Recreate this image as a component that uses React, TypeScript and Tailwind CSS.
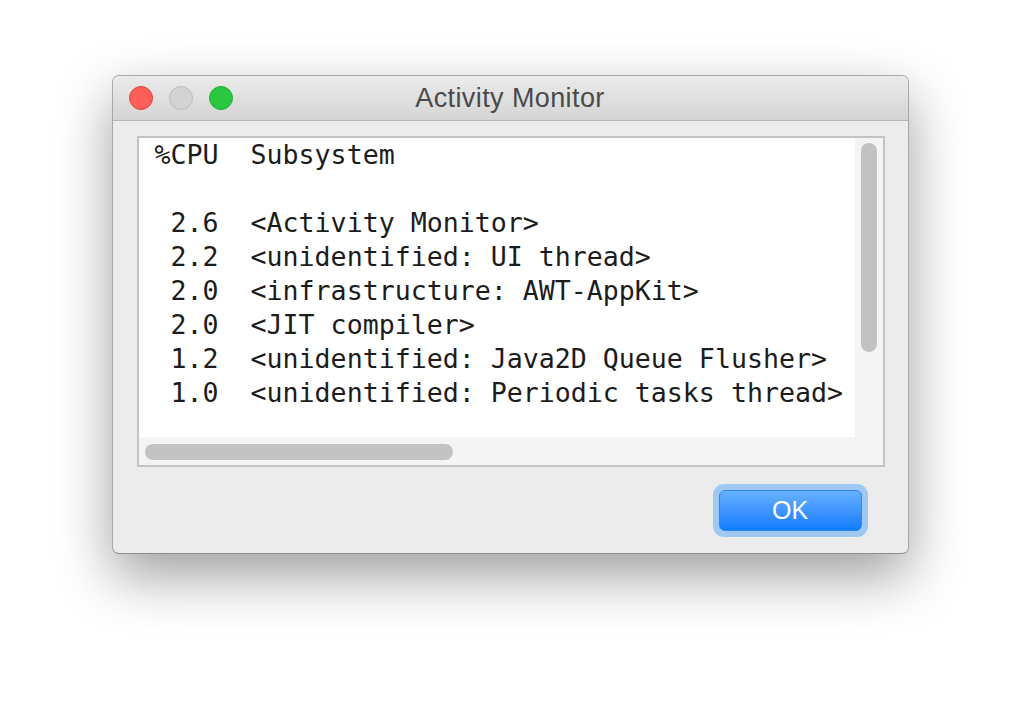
import React from 'react';

const rows: string[] = [
  '%CPU  Subsystem',
  '',
  ' 2.6  <Activity Monitor>',
  ' 2.2  <unidentified: UI thread>',
  ' 2.0  <infrastructure: AWT-AppKit>',
  ' 2.0  <JIT compiler>',
  ' 1.2  <unidentified: Java2D Queue Flusher>',
  ' 1.0  <unidentified: Periodic tasks thread>',
];

const TrafficLights: React.FC = () => (
  <div className="flex items-center gap-4">
    <span className="w-6 h-6 rounded-full bg-[#fe5f57] border border-[#e0443e]" />
    <span className="w-6 h-6 rounded-full bg-[#d3d3d3] border border-[#bcbcbc]" />
    <span className="w-6 h-6 rounded-full bg-[#2ac840] border border-[#1fae2f]" />
  </div>
);

const App: React.FC = () => {
  return (
    <div className="w-[1020px] h-[702px] bg-white flex justify-center pt-[75px]">
      <div className="w-[797px] h-[479px] flex flex-col rounded-[7px] overflow-hidden bg-[#ececec] border border-[#a8a8a8] border-b-[#8e8e8e] shadow-[0_22px_55px_rgba(0,0,0,0.38)]">
        {/* title bar */}
        <div className="relative h-[45px] shrink-0 flex items-center px-4 bg-gradient-to-b from-[#ebebeb] to-[#d5d5d5] border-b border-[#b8b8b8]">
          <TrafficLights />
          <div
            className="absolute inset-0 flex items-center justify-center text-[27px] tracking-[0.4px] text-[#4a4a4a]"
            style={{ fontFamily: '"Liberation Sans", Arial, sans-serif' }}
          >
            Activity Monitor
          </div>
        </div>

        {/* content */}
        <div className="flex-1 flex flex-col pt-[15px] pl-[24px] pr-[23px]">
          <div className="w-[748px] h-[331px] border-2 border-[#c3c3c3] grid grid-cols-[716px_28px] grid-rows-[299px_28px] bg-[#f4f4f4]">
            <div
              className="bg-white pl-4 text-[26.6px] leading-[34px] text-[#1c1c1c] whitespace-pre overflow-hidden"
              style={{ fontFamily: '"DejaVu Sans Mono", "Liberation Mono", monospace' }}
            >
              {rows.map((r, i) => (
                <div key={i} className="h-[34px]">{r}</div>
              ))}
            </div>
            <div className="pl-[6px] pt-[5px]">
              <div className="w-4 h-[209px] rounded-full bg-[#c2c2c2]" />
            </div>
            <div className="pl-[6px] pt-[7px]">
              <div className="w-[308px] h-4 rounded-full bg-[#c2c2c2]" />
            </div>
            <div />
          </div>

          <div className="flex justify-end pt-[17px] pr-[17px]">
            <div className="rounded-[11px] bg-[#a0c8f5] p-[6px]">
              <button
                className="w-[143px] h-[41px] rounded-[6px] bg-gradient-to-b from-[#65b0ff] to-[#0b7bff] border border-[#2b86f0] text-white text-[25px] flex items-center justify-center"
                style={{ fontFamily: '"Liberation Sans", Arial, sans-serif' }}
              >
                OK
              </button>
            </div>
          </div>
        </div>
      </div>
    </div>
  );
};

export default App;
